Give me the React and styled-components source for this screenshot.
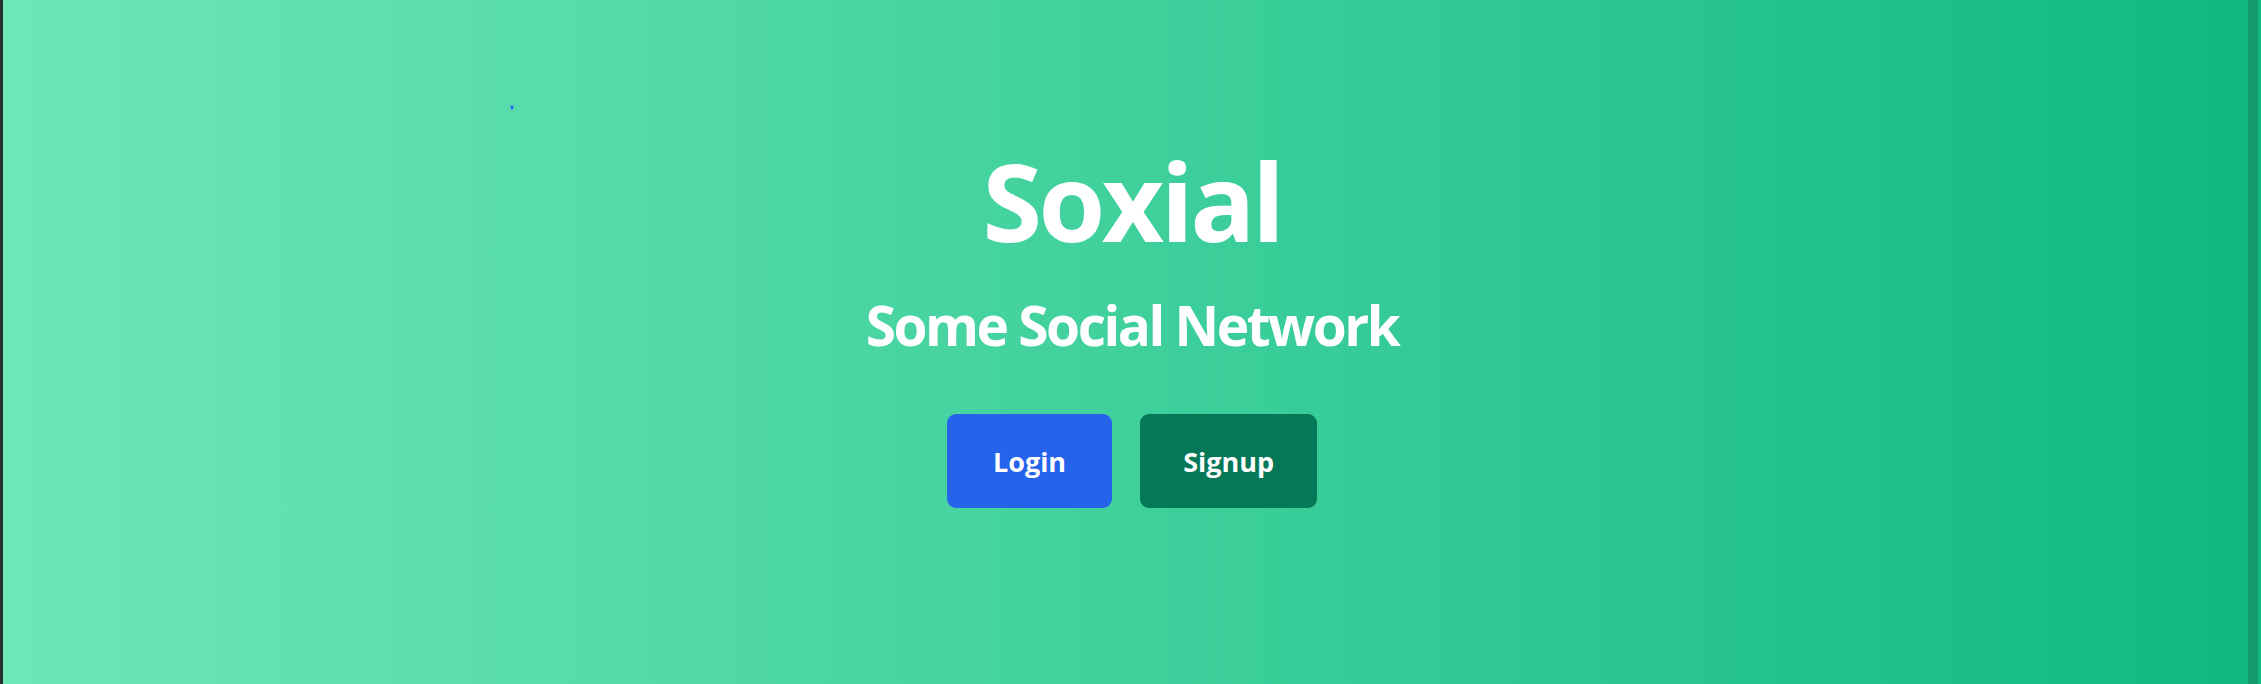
import styled, { createGlobalStyle } from "styled-components";

const GlobalStyle = createGlobalStyle`
  html, body {
    margin: 0;
    padding: 0;
    height: 100%;
  }
  body {
    font-family: "Open Sans", "Noto Sans", sans-serif;
    background: #2a2d2f;
  }
  #root {
    height: 100%;
  }
`;

const Page = styled.div`
  display: flex;
  height: 684px;
  padding-left: 3px;
  box-sizing: border-box;
`;

const Hero = styled.main`
  position: relative;
  flex: 1;
  display: flex;
  flex-direction: column;
  align-items: center;
  padding-top: 147px;
  background: linear-gradient(to right, #6ee7b7, #10b981);
  color: #fff;
`;

// thin darker strip sitting over the right edge
const EdgeBar = styled.div`
  position: absolute;
  top: 0;
  right: 3px;
  bottom: 0;
  width: 10px;
  background: #129a6b;
`;

const Dot = styled.span`
  position: absolute;
  left: 508px;
  top: 106px;
  width: 2px;
  height: 3px;
  background: #1d4ed8;
  box-shadow: 0 0 3px 1px rgba(59, 130, 246, 0.35);
`;

const Title = styled.h1`
  margin: 0;
  font-size: 108px;
  font-weight: 700;
  line-height: 1;
  letter-spacing: -3.5px;
`;

const Subtitle = styled.h2`
  margin: 42px 0 0;
  font-size: 55px;
  font-weight: 700;
  line-height: 1;
  letter-spacing: -2.5px;
`;

const Actions = styled.div`
  display: flex;
  gap: 28px;
  margin-top: 62px;
`;

const Button = styled.button`
  height: 94px;
  padding: 0 ${(p) => p.$pad}px;
  border: none;
  border-radius: 9px;
  background: ${(p) => p.$bg};
  color: #fff;
  font-family: inherit;
  font-size: 27px;
  font-weight: 700;
  cursor: pointer;
`;

export default function App() {
  return (
    <>
      <GlobalStyle />
      <Page>
        <Hero>
          <Dot />
          <Title>Soxial</Title>
          <Subtitle>Some Social Network</Subtitle>
          <Actions>
            <Button $bg="#2563eb" $pad={46}>Login</Button>
            <Button $bg="#047857" $pad={43}>Signup</Button>
          </Actions>
          <EdgeBar />
        </Hero>
      </Page>
    </>
  );
}
